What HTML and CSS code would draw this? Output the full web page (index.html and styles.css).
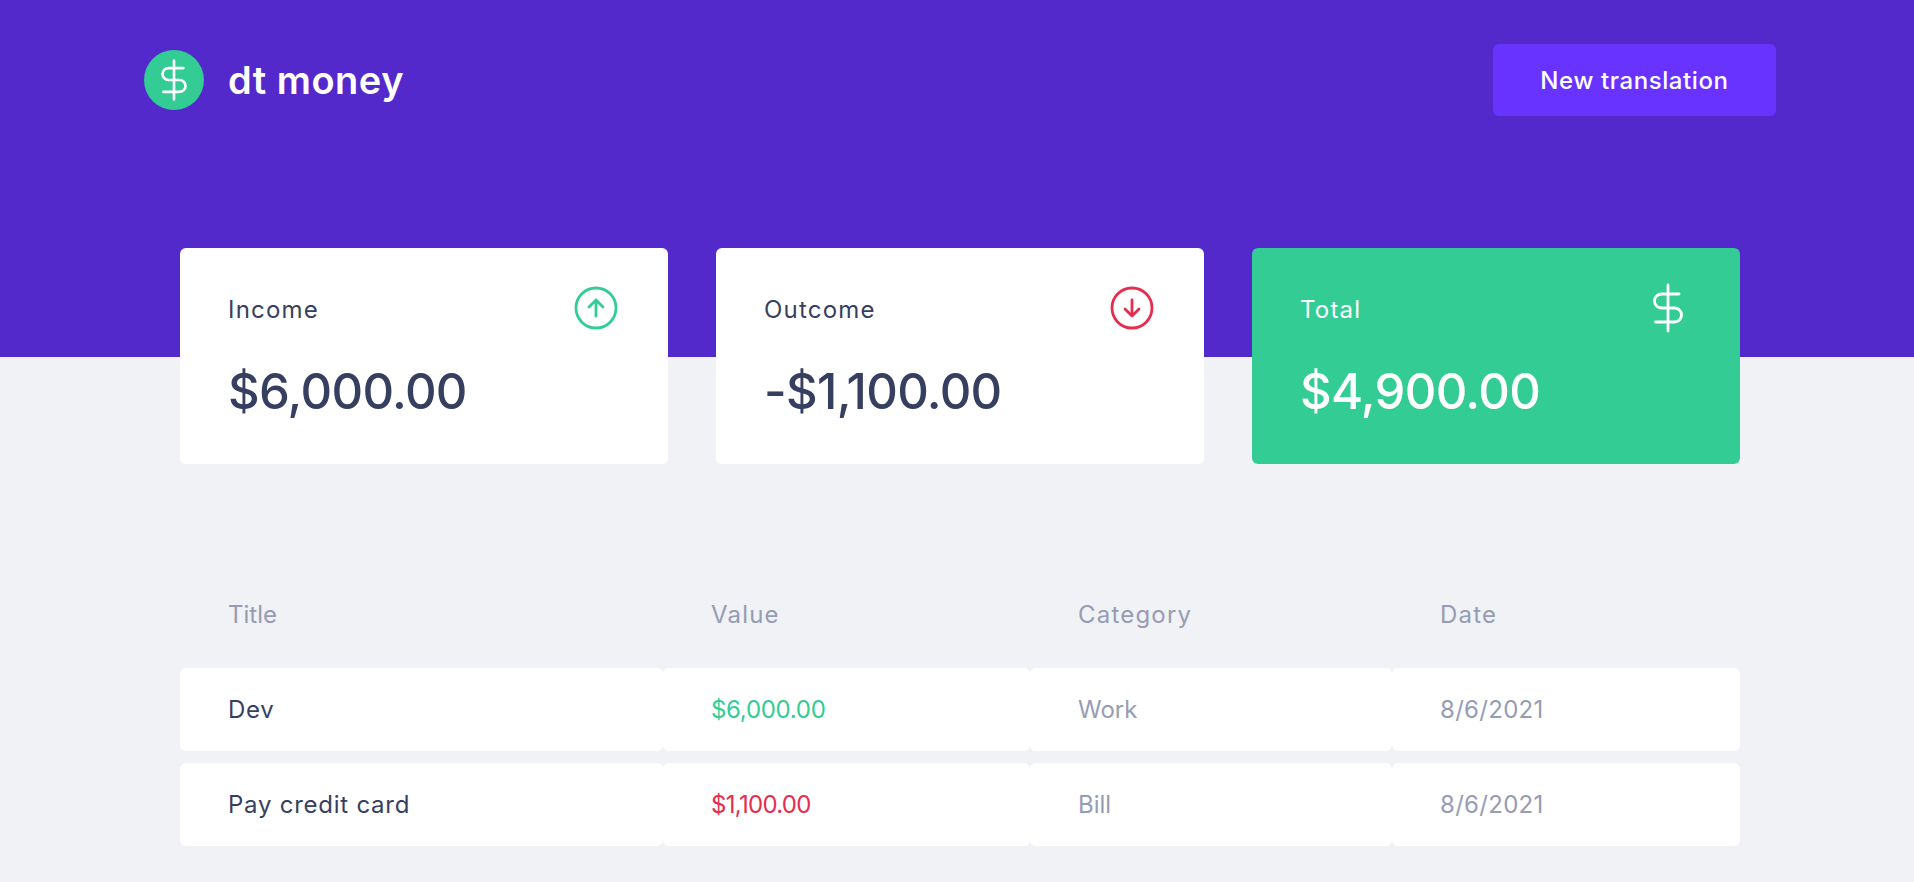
FILE: index.html
```html
<!DOCTYPE html>
<html lang="en">
<head>
<meta charset="utf-8">
<title>dt money</title>
<link rel="stylesheet" href="styles.css">
</head>
<body>
<header class="header">
  <div class="header-inner">
    <div class="logo">
      <span class="logo-mark">
        <svg class="logo-dollar" viewBox="-2 0 40 56" fill="none" stroke="#fff" stroke-width="3.1" stroke-linecap="round" stroke-linejoin="round"><path d="M18 5V51M29 14H11.5A7 7 0 0 0 11.5 28H24.5A7 7 0 0 1 24.5 42H5.5"/></svg>
      </span>
      <span class="logo-text">dt money</span>
    </div>
    <button class="new-btn" type="button">New translation</button>
  </div>
</header>
<main class="main">
  <section class="summary">
    <div class="card">
      <div class="card-head">
        <span class="card-label">Income</span>
        <svg class="card-icon" viewBox="0 0 44 44" fill="none" stroke="#33cc95" stroke-width="2.8" stroke-linecap="round" stroke-linejoin="round"><circle cx="22" cy="22" r="20"/><path d="M22 30V14M15 21L22 14L29 21"/></svg>
      </div>
      <strong class="card-value">$6,000.00</strong>
    </div>
    <div class="card">
      <div class="card-head">
        <span class="card-label">Outcome</span>
        <svg class="card-icon" viewBox="0 0 44 44" fill="none" stroke="#e52e4d" stroke-width="2.8" stroke-linecap="round" stroke-linejoin="round"><circle cx="22" cy="22" r="20"/><path d="M22 14V30M15 23L22 30L29 23"/></svg>
      </div>
      <strong class="card-value">-$1,100.00</strong>
    </div>
    <div class="card card-total">
      <div class="card-head">
        <span class="card-label">Total</span>
        <svg class="card-icon-dollar" viewBox="0 0 40 56" fill="none" stroke="#fff" stroke-width="2.8" stroke-linecap="round" stroke-linejoin="round"><path d="M18 5V51M29 14H11.5A7 7 0 0 0 11.5 28H24.5A7 7 0 0 1 24.5 42H5.5"/></svg>
      </div>
      <strong class="card-value">$4,900.00</strong>
    </div>
  </section>
  <table class="tx">
    <colgroup><col class="c1"><col class="c2"><col class="c3"><col class="c4"></colgroup>
    <thead>
      <tr><th class="th-title">Title</th><th>Value</th><th>Category</th><th>Date</th></tr>
    </thead>
    <tbody>
      <tr><td class="tx-title">Dev</td><td class="income">$6,000.00</td><td>Work</td><td class="tx-date">8/6/2021</td></tr>
      <tr><td class="tx-title">Pay credit card</td><td class="outcome">$1,100.00</td><td>Bill</td><td class="tx-date">8/6/2021</td></tr>
    </tbody>
  </table>
</main>
</body>
</html>
```
FILE: styles.css
```css
* { margin: 0; padding: 0; box-sizing: border-box; }
html, body { background: #f0f2f5; }
body { font-family: Inter, "Liberation Sans", sans-serif; color: #363f5f; }

.header { background: #5429cc; height: 357px; }
.header-inner { display: flex; align-items: center; justify-content: space-between; padding: 44px 138px 0 144px; }
.logo { display: flex; align-items: center; gap: 24px; }
.logo-mark { width: 60px; height: 60px; border-radius: 50%; background: #33cc95; display: flex; align-items: center; justify-content: center; }
.logo-dollar { width: 34px; height: 48px; display: block; }
.logo-text { color: #fff; font-size: 38px; font-weight: 600; line-height: 44px; letter-spacing: 0.5px; }
.new-btn { width: 283px; height: 72px; border: 0; border-radius: 6px; background: #6933ff; color: #fff; font: 500 24px Inter, sans-serif; letter-spacing: 0.6px; }

.main { width: 1560px; margin: -109px 0 0 180px; }
.summary { display: grid; grid-template-columns: repeat(3, 488px); gap: 48px; }
.card { background: #fff; border-radius: 6px; height: 216px; padding: 32px 48px 0; }
.card-head { display: flex; align-items: center; justify-content: space-between; height: 56px; }
.card-label { font-size: 24px; font-weight: 400; letter-spacing: 1.2px; padding-top: 2px; }
.card-icon { width: 44px; height: 44px; display: block; margin-right: 2px; }
.card-icon-dollar { width: 40px; height: 56px; display: block; margin-right: 2px; }
.card-value { display: block; margin-top: 28px; font-size: 49px; line-height: 56px; font-weight: 500; letter-spacing: -0.67px; }
.card-total { background: #33cc95; color: #fff; }

.tx { width: 1560px; margin-top: 97px; border-collapse: separate; border-spacing: 0 12px; table-layout: fixed; }
.c1 { width: 483px; }
.c2 { width: 367px; }
.c3 { width: 362px; }
.c4 { width: 348px; }
th { height: 83px; padding: 0 48px; text-align: left; color: #969cb3; font-size: 24px; font-weight: 400; letter-spacing: 1.2px; }
th.th-title { letter-spacing: 0; }
td { height: 83px; padding: 0 48px; background: #fff; color: #969cb3; font-size: 24px; border-radius: 6px; }
td.tx-title { color: #363f5f; letter-spacing: 0.75px; }
td.tx-date { letter-spacing: 0.3px; }
td.income { color: #33cc95; letter-spacing: -0.3px; }
td.outcome { color: #e52e4d; letter-spacing: -0.7px; }
```
